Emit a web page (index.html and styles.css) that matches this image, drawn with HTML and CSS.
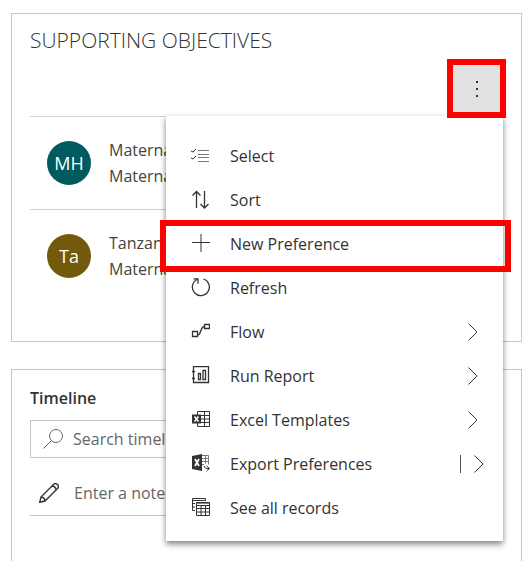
FILE: index.html
```
<!DOCTYPE html>
<html lang="en">
<head>
<meta charset="utf-8">
<meta name="viewport" content="width=device-width, initial-scale=1">
<title>Supporting Objectives</title>
<link rel="stylesheet" href="styles.css">
</head>
<body>
<main class="page">
  <section class="card objectives">
    <h2 class="card-title">SUPPORTING OBJECTIVES</h2>
    <div class="toolbar">
      <button class="more" type="button" aria-label="More commands" aria-expanded="true">
        <svg width="16" height="20" viewBox="0 0 16 20"><path d="M7 2h2v2H7zM7 9h2v2H7zM7 16h2v2H7z" fill="#333"/></svg>
      </button>
      <div class="menu" role="menu">
        <button class="item" type="button" role="menuitem">
          <svg class="icon" viewBox="0 0 20 20" stroke="#666"><path d="M8 4.500h11M8 8.500h11M8 11.500h11M8 15.500h11" stroke="#777"/><path d="M1 5l2 1 3-3M1 12l2 1 3-3"/></svg>
          <span class="label">Select</span>
        </button>
        <button class="item" type="button" role="menuitem">
          <svg class="icon thick" viewBox="0 0 20 20"><path d="M6.500 18V2M2.500 5.500l4-4 4 4M14.500 1v17M10.500 14l4 4 4-4"/></svg>
          <span class="label">Sort</span>
        </button>
        <button class="item marked" type="button" role="menuitem">
          <svg class="icon" viewBox="0 0 20 20"><path d="M2 8.500h18M11 0v18"/></svg>
          <span class="label">New Preference</span>
        </button>
        <button class="item" type="button" role="menuitem">
          <svg class="icon thick" viewBox="0 0 20 20"><path d="M13.500 1A8.500 8.500 0 1 1 7 1.500M3.500.8H8v5"/></svg>
          <span class="label">Refresh</span>
        </button>
        <button class="item" type="button" role="menuitem">
          <svg class="icon thick" viewBox="0 0 20 20"><path d="M2.500 9.500h5v5h-5zM14.500 2.500h5v4h-5zM7.500 13c4 0 2.500-8.500 7-8.500"/></svg>
          <span class="label">Flow</span>
          <svg class="chevron" viewBox="0 0 12 20"><path d="M1.500 1.500L10 10l-8.500 8.500"/></svg>
        </button>
        <button class="item" type="button" role="menuitem">
          <svg class="icon thick" viewBox="0 0 20 20"><path d="M3.500.5h15v16h-15zM2 5.500h3M2 12.500h3M8.500 7.500h2v6h-2zM13 4.500h2.500v9H13z"/></svg>
          <span class="label">Run Report</span>
          <svg class="chevron" viewBox="0 0 12 20"><path d="M1.500 1.500L10 10l-8.500 8.500"/></svg>
        </button>
        <button class="item" type="button" role="menuitem">
          <svg class="icon" viewBox="0 0 20 20"><path d="M7.500 1.500h12v15h-12zM7.500 5.500h12M7.500 9h12M7.500 12.500h12M14.500 1.500v15"/><path d="M2 4.500h9v9H2z" fill="#333" stroke="none"/><path d="M4.500 6.500l4 5M8.500 6.500l-4 5" stroke="#fff" stroke-width="1.500"/></svg>
          <span class="label">Excel Templates</span>
          <svg class="chevron" viewBox="0 0 12 20"><path d="M1.500 1.500L10 10l-8.500 8.500"/></svg>
        </button>
        <button class="item" type="button" role="menuitem">
          <svg class="icon" viewBox="0 0 20 20"><path d="M2 2l10-2v17L2 15z" fill="#333" stroke="none"/><path d="M5 5l4 7M9 5l-4 7" stroke="#fff" stroke-width="1.700"/><path d="M12 1.500h6.500v9M12 4.500h6M12 7.500h6M15.500 1.500v8M12 10.500h2" stroke="#777"/><path d="M14 12c1 2.500 2 2.500 5 2.500M16.500 12l3 2.500-3 2.500"/></svg>
          <span class="label">Export Preferences</span>
          <span class="divider"></span>
          <svg class="chevron split" viewBox="0 0 12 20"><path d="M1.500 1.500L10 10l-8.500 8.500"/></svg>
        </button>
        <button class="item" type="button" role="menuitem">
          <svg class="icon" viewBox="0 0 20 20"><path d="M15.500 2.500v-2h-13v12H5M2.500 2.500h13M2.500 5.500H5M2.500 9H5"/><path d="M6.500 4.500h13v13h-13zM6.500 7.500h13M6.500 10.500h13M6.500 14h13M11 7.500v10M15.500 7.500v10"/><path d="M7 5.500h12" stroke="#888"/></svg>
          <span class="label">See all records</span>
        </button>
      </div>
    </div>
    <ul class="records">
      <li class="record">
        <span class="avatar teal">MH</span>
        <div class="record-text"><div>Maternal</div><div>Maternal</div></div>
      </li>
      <li class="record">
        <span class="avatar olive">Ta</span>
        <div class="record-text"><div>Tanzania</div><div>Maternal</div></div>
      </li>
    </ul>
  </section>

  <section class="card timeline">
    <h2 class="timeline-title">Timeline</h2>
    <label class="field search">
      <svg class="field-icon" viewBox="0 0 20 20" stroke="#666"><circle cx="13" cy="7" r="6.500"/><path d="M8.500 11.500L.5 19.500"/></svg>
      <input type="search" aria-label="Search timeline" placeholder="Search timeline">
    </label>
    <label class="field note">
      <svg class="field-icon pencil" viewBox="0 0 20 20" stroke="#333"><path d="M.7 19.300L2 14 14.500 1.500c1.200-1.200 2.800-1.200 4 0s1.200 2.800 0 4L6 18zM2 14c2 .2 3.800 2 4 4M13 3c2 .2 3.800 2 4 4"/></svg>
      <input type="text" aria-label="Enter a note" placeholder="Enter a note...">
    </label>
  </section>
</main>
</body>
</html>
```
FILE: styles.css
```
* { box-sizing: border-box; }

body {
  margin: 0;
  background: #fff;
  color: #333;
  font: 16px/26px "Open Sans", "Noto Sans", sans-serif;
}

.page {
  display: flex;
  flex-direction: column;
  gap: 27px;
  min-height: 100vh;
  padding: 13px 10px 0 11px;
}

.card {
  padding: 0 18px;
  border: 1px solid #c8c6c4;
}

.objectives { padding-bottom: 39px; }

.card-title {
  margin: 0;
  padding: 12px 0 11px;
  font-size: 21px;
  line-height: 28px;
  font-weight: 300;
}

.toolbar {
  position: relative;
  display: flex;
  justify-content: flex-end;
  padding: 0 3px 4px;
}

.more {
  z-index: 2;
  display: grid;
  place-items: center;
  width: 47px;
  height: 47px;
  padding: 0;
  border: 0;
  background: #e1e1e1;
  outline: 6px solid #f00;
}

.menu {
  position: absolute;
  z-index: 1;
  top: 100%;
  right: 0;
  width: 337px;
  max-width: 100%;
  padding: 18px 0 11px;
  background: #fff;
  box-shadow: 0 3px 6px rgba(0, 0, 0, 0.5);
}

.item {
  position: relative;
  display: flex;
  align-items: center;
  width: 100%;
  height: 44px;
  padding: 0 24px;
  border: 0;
  background: none;
  color: #333;
  font: inherit;
  text-align: left;
}

.marked::after {
  content: "";
  position: absolute;
  inset: -2px -8px -6px -6px;
  border: 6px solid #f00;
}

svg {
  flex: none;
  fill: none;
}

.icon {
  width: 20px;
  height: 20px;
  margin-right: 20px;
  stroke: #333;
}

.thick { stroke-width: 1.3; }

.label { flex: 1; }

.chevron {
  width: 12px;
  height: 20px;
  stroke: #333;
}

.divider {
  width: 1px;
  height: 18px;
  background: #555;
}

.split { margin: 0 -6px 0 12px; }

.records {
  margin: 0;
  padding: 0;
  list-style: none;
}

.record {
  display: flex;
  align-items: center;
  gap: 18px;
  height: 93px;
  padding-left: 17px;
  border-top: 1px solid #d2d0ce;
  color: #444;
}

.avatar {
  display: grid;
  place-items: center;
  width: 44px;
  height: 44px;
  border-radius: 50%;
  color: #fff;
  font-size: 18px;
}

.teal { background: #005b60; }
.olive { background: #73590c; }

.timeline {
  flex: 1;
  border-bottom: 0;
}

.timeline-title {
  margin: 0;
  padding: 15px 0 9px;
  font-size: 16px;
  line-height: 26px;
  font-weight: 600;
}

.field {
  display: flex;
  align-items: center;
  border: 1px solid #c8c6c4;
}

.field-icon {
  width: 20px;
  height: 20px;
}

.pencil { stroke-width: 1.4; }

.field input {
  flex: 1;
  min-width: 0;
  padding: 0;
  border: 0;
  outline: 0;
  background: none;
  font: inherit;
}

.field input::placeholder {
  color: #666;
  opacity: 1;
}

.search {
  gap: 10px;
  height: 38px;
  padding: 0 12px;
}

.note {
  gap: 15px;
  height: 58px;
  padding: 12px 9px 0;
  border-width: 0 0 1px;
}
```
